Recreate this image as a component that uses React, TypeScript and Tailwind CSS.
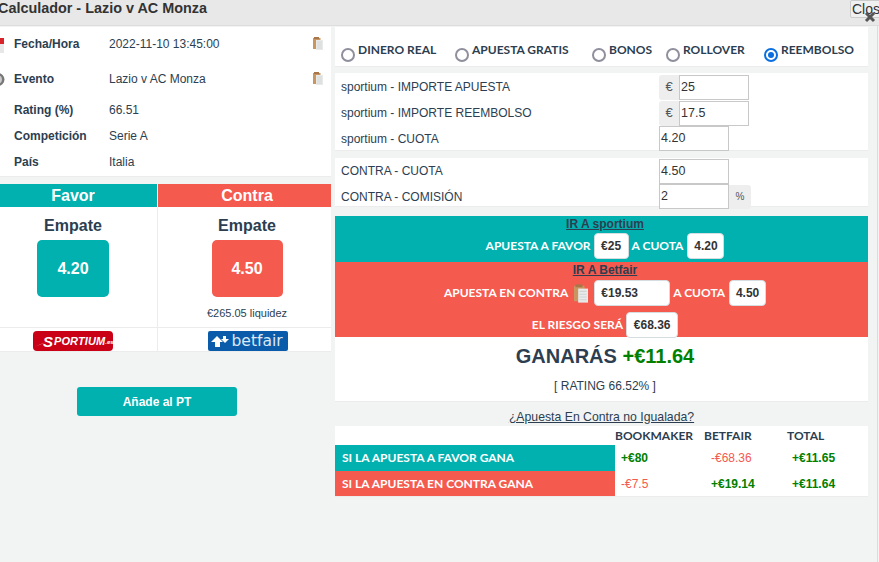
import React from "react";

const font = { fontFamily: '"Liberation Sans", Arial, sans-serif' };
const lato = { fontFamily: 'Lato, "Liberation Sans", sans-serif' };

function Clip({ big = false }: { big?: boolean }) {
  return (
    <svg width={big ? 14 : 10} height={big ? 19 : 13} viewBox="0 0 10 13" className="shrink-0">
      <rect x="0" y="1" width="7.5" height="11" fill="#c99560" />
      <rect x="1" y="0" width="5" height="2" fill="#a8764a" />
      <rect x="3" y="3" width="7" height="10" fill="#e8eaea" />
      <path d="M4 5h5M4 7h5M4 9h5M4 11h5" stroke="#d0d3d3" strokeWidth="0.8" />
    </svg>
  );
}

function InfoRow({ label, value, h, clip }: { label: string; value: string; h: string; clip?: boolean }) {
  return (
    <div className={`flex items-center pl-[14px] pr-2 ${h}`}>
      <span className="w-[95px] font-bold text-[#2c3e50] text-[12px]">{label}</span>
      <span className="flex-1 text-[#2c3e50] text-[12px]">{value}</span>
      {clip && <Clip />}
    </div>
  );
}

function Radio({ label, w, on }: { label: string; w?: string; on?: boolean }) {
  return (
    <div className={`flex items-start ${w ?? ""}`}>
      <span
        className={`mt-[5px] w-[14px] h-[14px] rounded-full border-2 bg-white flex items-center justify-center shrink-0 ${on ? "border-[#0b6fe0]" : "border-[#8f8f9d]"}`}
      >
        {on && <span className="w-[6px] h-[6px] rounded-full bg-[#0b6fe0]" />}
      </span>
      <span style={lato} className="ml-[3px] font-bold text-[12px] text-[#2c3e50] leading-[14px]">{label}</span>
    </div>
  );
}

function Box({ children, w, h = "h-[25px]" }: { children: React.ReactNode; w: string; h?: string }) {
  return (
    <div className={`${w} ${h} border border-[#c8c8c8] bg-white text-[12.5px] text-[#333] flex items-center pl-px`}>
      {children}
    </div>
  );
}

function Addon({ children, cls }: { children: React.ReactNode; cls: string }) {
  return (
    <div className={`bg-[#eeeeee] text-[#555] flex items-center justify-center ${cls}`}>{children}</div>
  );
}

function FieldRow({ label, h, children }: { label: string; h: string; children: React.ReactNode }) {
  return (
    <div className={`flex items-center ${h}`}>
      <span className="w-[324px] pl-[6px] text-[12px] text-[#2c3e50] shrink-0">{label}</span>
      {children}
    </div>
  );
}

function Chip({ children, cls = "" }: { children: React.ReactNode; cls?: string }) {
  return (
    <span style={font} className={`inline-flex items-center justify-center bg-white rounded-[4px] border border-[#d5dde0] text-[12px] font-bold text-[#333] h-[26px] ${cls}`}>
      {children}
    </span>
  );
}

export default function App() {
  return (
    <div style={font} className="relative w-[879px] h-[562px] overflow-hidden bg-[#f2f4f4]">
      <div className="h-[26px] bg-[#e8e8e8] border-b border-[#dddddd] flex items-start">
        <span className="-ml-[2px] text-[14.4px] leading-[17px] font-bold text-[#333]">Calculador - Lazio v AC Monza</span>
      </div>

      <div className="flex items-start pt-px">
        {/* LEFT */}
        <div className="w-[331px] shrink-0">
          <div className="relative bg-white h-[150px] border-b border-[#ececec]">
            <InfoRow label="Fecha/Hora" value="2022-11-10 13:45:00" h="h-[33px]" clip />
            <InfoRow label="Evento" value="Lazio v AC Monza" h="h-[37px]" clip />
            <InfoRow label="Rating (%)" value="66.51" h="h-[26px]" />
            <InfoRow label="Competición" value="Serie A" h="h-[26px]" />
            <InfoRow label="País" value="Italia" h="h-[26px]" />
            <svg className="absolute left-0 top-[11px]" width="4" height="15" viewBox="0 0 4 15">
              <rect width="4" height="15" fill="#e7e7e7" />
              <rect width="4" height="6" fill="#d8232a" />
            </svg>
            <svg className="absolute left-0 top-[45px]" width="5" height="15" viewBox="0 0 5 15">
              <circle cx="-2" cy="7.5" r="6.5" fill="#777" />
              <circle cx="-2" cy="7.5" r="4" fill="#ccc" />
            </svg>
          </div>

          <div className="mt-[7px] bg-white border-b border-[#ececec]">
            <div className="flex h-[23px]">
              <div className="w-[157px] pr-[11px] bg-[#00b1b0] text-white font-bold text-[16px] flex items-center justify-center">Favor</div>
              <div className="ml-px pl-[5px] flex-1 bg-[#f55a4e] text-white font-bold text-[16px] flex items-center justify-center">Contra</div>
            </div>
            <div className="flex h-[121px] border-b border-[#ececec]">
              <div className="w-[157px] pr-[11px] flex flex-col items-center pt-[10px]">
                <span className="font-bold text-[16px] leading-[18px] text-[#2c3e50]">Empate</span>
                <div className="mt-[5px] w-[72px] h-[57px] rounded-[5px] bg-[#00b1b0] text-white font-bold text-[16px] flex items-center justify-center">4.20</div>
              </div>
              <div className="flex-1 pl-[5px] border-l border-[#ececec] flex flex-col items-center pt-[10px]">
                <span className="font-bold text-[16px] leading-[18px] text-[#2c3e50]">Empate</span>
                <div className="mt-[5px] w-[71px] h-[57px] rounded-[5px] bg-[#f55a4e] text-white font-bold text-[16px] flex items-center justify-center">4.50</div>
                <span className="mt-[9px] text-[11px] leading-[14px] text-[#2c3e50]">€265.05 liquidez</span>
              </div>
            </div>
            <div className="flex h-[23px]">
              <div className="w-[157px] pr-[11px] flex justify-center pt-[3px]">
                <div className="relative w-[80px] h-[20px] rounded-[4px] bg-[#c90016] text-white italic font-bold text-[11px] flex items-center pl-[10px]">
                  <svg className="absolute left-[2px] top-[5px]" width="14" height="11" viewBox="0 0 14 11">
                    <path d="M0 10.5L12 6l-6 2z" fill="#fff" />
                  </svg>
                  <span className="text-[15px] leading-none">S</span>
                  <span className="ml-[1px] tracking-[0.1px]">PORTIUM</span>
                  <span className="text-[6px] mt-[3px]">.es</span>
                </div>
              </div>
              <div className="flex-1 pl-[6px] border-l border-[#ececec] flex justify-center pt-[3px]">
                <div className="w-[80px] h-[20px] rounded-[2px] bg-[#0a5cab] flex items-center pl-[3px] gap-[3px] overflow-hidden">
                  <svg width="18" height="13" viewBox="0 0 18 13" className="shrink-0">
                    <path d="M0 7l6-6 6 6H9v5H4V7z" fill="#fff" />
                    <path d="M12 1h3v3h3l-4 4-4-4h2z" fill="#fff" />
                  </svg>
                  <span style={{ fontFamily: '"DejaVu Sans", sans-serif' }} className="text-[15.5px] leading-[18px] text-[#dbe9f6] font-normal">betfair</span>
                </div>
              </div>
            </div>
          </div>

          <div className="mt-[35px] flex justify-center pr-[17px]">
            <div className="w-[160px] h-[29px] rounded-[3px] bg-[#00b1b0] text-white font-bold text-[12px] flex items-center justify-center">Añade al PT</div>
          </div>
        </div>

        {/* RIGHT */}
        <div className="ml-[4px] w-[533px] shrink-0">
          <div className="h-[40px] bg-white border-b border-[#ececec] flex items-start pl-[6px] pt-[16px]">
            <Radio label="DINERO REAL" w="w-[114px]" />
            <Radio label="APUESTA GRATIS" w="w-[137px]" />
            <Radio label="BONOS" w="w-[74px]" />
            <Radio label="ROLLOVER" w="w-[98px]" />
            <Radio label="REEMBOLSO" on />
          </div>

          <div className="mt-[6px] h-[78px] bg-white border-b border-[#ececec] pt-px">
            <FieldRow label="sportium - IMPORTE APUESTA" h="h-[26px]">
              <Addon cls="w-[20px] h-[25px] text-[13px] rounded-l-[3px]">€</Addon>
              <Box w="w-[70px]">25</Box>
            </FieldRow>
            <FieldRow label="sportium - IMPORTE REEMBOLSO" h="h-[26px]">
              <Addon cls="w-[20px] h-[25px] text-[13px] rounded-l-[3px]">€</Addon>
              <Box w="w-[70px]">17.5</Box>
            </FieldRow>
            <FieldRow label="sportium - CUOTA" h="h-[25px]">
              <Box w="w-[70px]">4.20</Box>
            </FieldRow>
          </div>

          <div className="mt-[7px] h-[49px] bg-white border-b border-[#ececec]">
            <FieldRow label="CONTRA - CUOTA" h="h-[26px]">
              <Box w="w-[70px]">4.50</Box>
            </FieldRow>
            <FieldRow label="CONTRA - COMISIÓN" h="h-[25px]">
              <Box w="w-[70px]">2</Box>
              <Addon cls="w-[22px] h-[24px] text-[10px] rounded-r-[3px]">%</Addon>
            </FieldRow>
          </div>

          <div className="mt-[9px] h-[46px] pl-[7px] bg-[#00b1b0] flex flex-col items-center">
            <span className="text-[12px] leading-[14px] mt-px font-bold text-[#2c3e50] underline">IR A sportium</span>
            <div style={lato} className="mt-[2px] flex items-center gap-[3px] text-[12px] font-bold text-white">
              <span>APUESTA A FAVOR</span>
              <Chip cls="w-[35px]">€25</Chip>
              <span>A CUOTA</span>
              <Chip cls="w-[37px] ml-px">4.20</Chip>
            </div>
          </div>

          <div className="h-[75px] pl-[7px] bg-[#f55a4e] flex flex-col items-center">
            <span className="text-[12px] leading-[14px] mt-px font-bold text-[#2c3e50] underline">IR A Betfair</span>
            <div style={lato} className="flex items-center text-[12px] font-bold text-white gap-[3px] mt-[3px]">
              <span>APUESTA EN CONTRA</span>
              <span className="mx-[3px] flex"><Clip big /></span>
              <Chip cls="w-[76px] justify-start pl-[6px]">€19.53</Chip>
              <span>A CUOTA</span>
              <Chip cls="w-[37px] ml-px">4.50</Chip>
            </div>
            <div style={lato} className="flex items-center text-[12px] font-bold text-white gap-[3px] mt-[6px]">
              <span>EL RIESGO SERÁ</span>
              <Chip cls="w-[52px] h-[25px]">€68.36</Chip>
            </div>
          </div>

          <div className="h-[65px] pl-[7px] bg-white border-b border-[#ececec] flex flex-col items-center">
            <div className="mt-[7px] text-[20px] leading-[24px] font-bold text-[#2c3e50]">
              GANARÁS <span className="text-[#008000]">+€11.64</span>
            </div>
            <div className="mt-[11px] text-[12px] leading-[14px] text-[#2c3e50]">[ RATING 66.52% ]</div>
          </div>

          <div className="h-[24px] flex items-end justify-center pb-[2px] text-[12.25px] leading-[14px] text-[#2c3e50] underline">¿Apuesta En Contra no Igualada?</div>

          <div className="bg-white border-b border-[#ececec] text-[12px] font-bold">
            <div style={lato} className="h-[19px] flex items-center text-[#2c3e50]">
              <span className="w-[280px]" />
              <span className="w-[89px]">BOOKMAKER</span>
              <span className="w-[83px]">BETFAIR</span>
              <span>TOTAL</span>
            </div>
            <div className="h-[26px] flex items-center">
              <span style={lato} className="w-[280px] h-full bg-[#00b1b0] text-white pl-[7px] flex items-center">SI LA APUESTA A FAVOR GANA</span>
              <span className="w-[89px] pl-[6px] text-[#008000]">+€80</span>
              <span className="w-[81px] pl-[7px] font-normal text-[#f55a4e]">-€68.36</span>
              <span className="text-[#008000] pl-[7px]">+€11.65</span>
            </div>
            <div className="h-[25px] flex items-center">
              <span style={lato} className="w-[280px] h-full bg-[#f55a4e] text-white pl-[7px] flex items-center">SI LA APUESTA EN CONTRA GANA</span>
              <span className="w-[89px] pl-[6px] font-normal text-[#f55a4e]">-€7.5</span>
              <span className="w-[81px] pl-[7px] text-[#008000]">+€19.14</span>
              <span className="text-[#008000] pl-[7px]">+€11.64</span>
            </div>
          </div>
        </div>
      </div>

      {/* overlays */}
      <div className="absolute left-[850px] top-0 w-[40px] h-[18px] bg-[#f0f0f0] border border-[#cccccc] rounded-[2px] text-[14px] leading-[16px] pl-px text-[#333]">Close</div>
      <svg className="absolute left-[864px] top-[11px]" width="12" height="12" viewBox="0 0 12 12">
        <path d="M2 2l8 8M10 2l-8 8" stroke="#555" strokeWidth="3" />
      </svg>
      <div className="absolute left-[877px] top-[26px] bottom-0 w-px bg-[#dcdcdc]" />
    </div>
  );
}
